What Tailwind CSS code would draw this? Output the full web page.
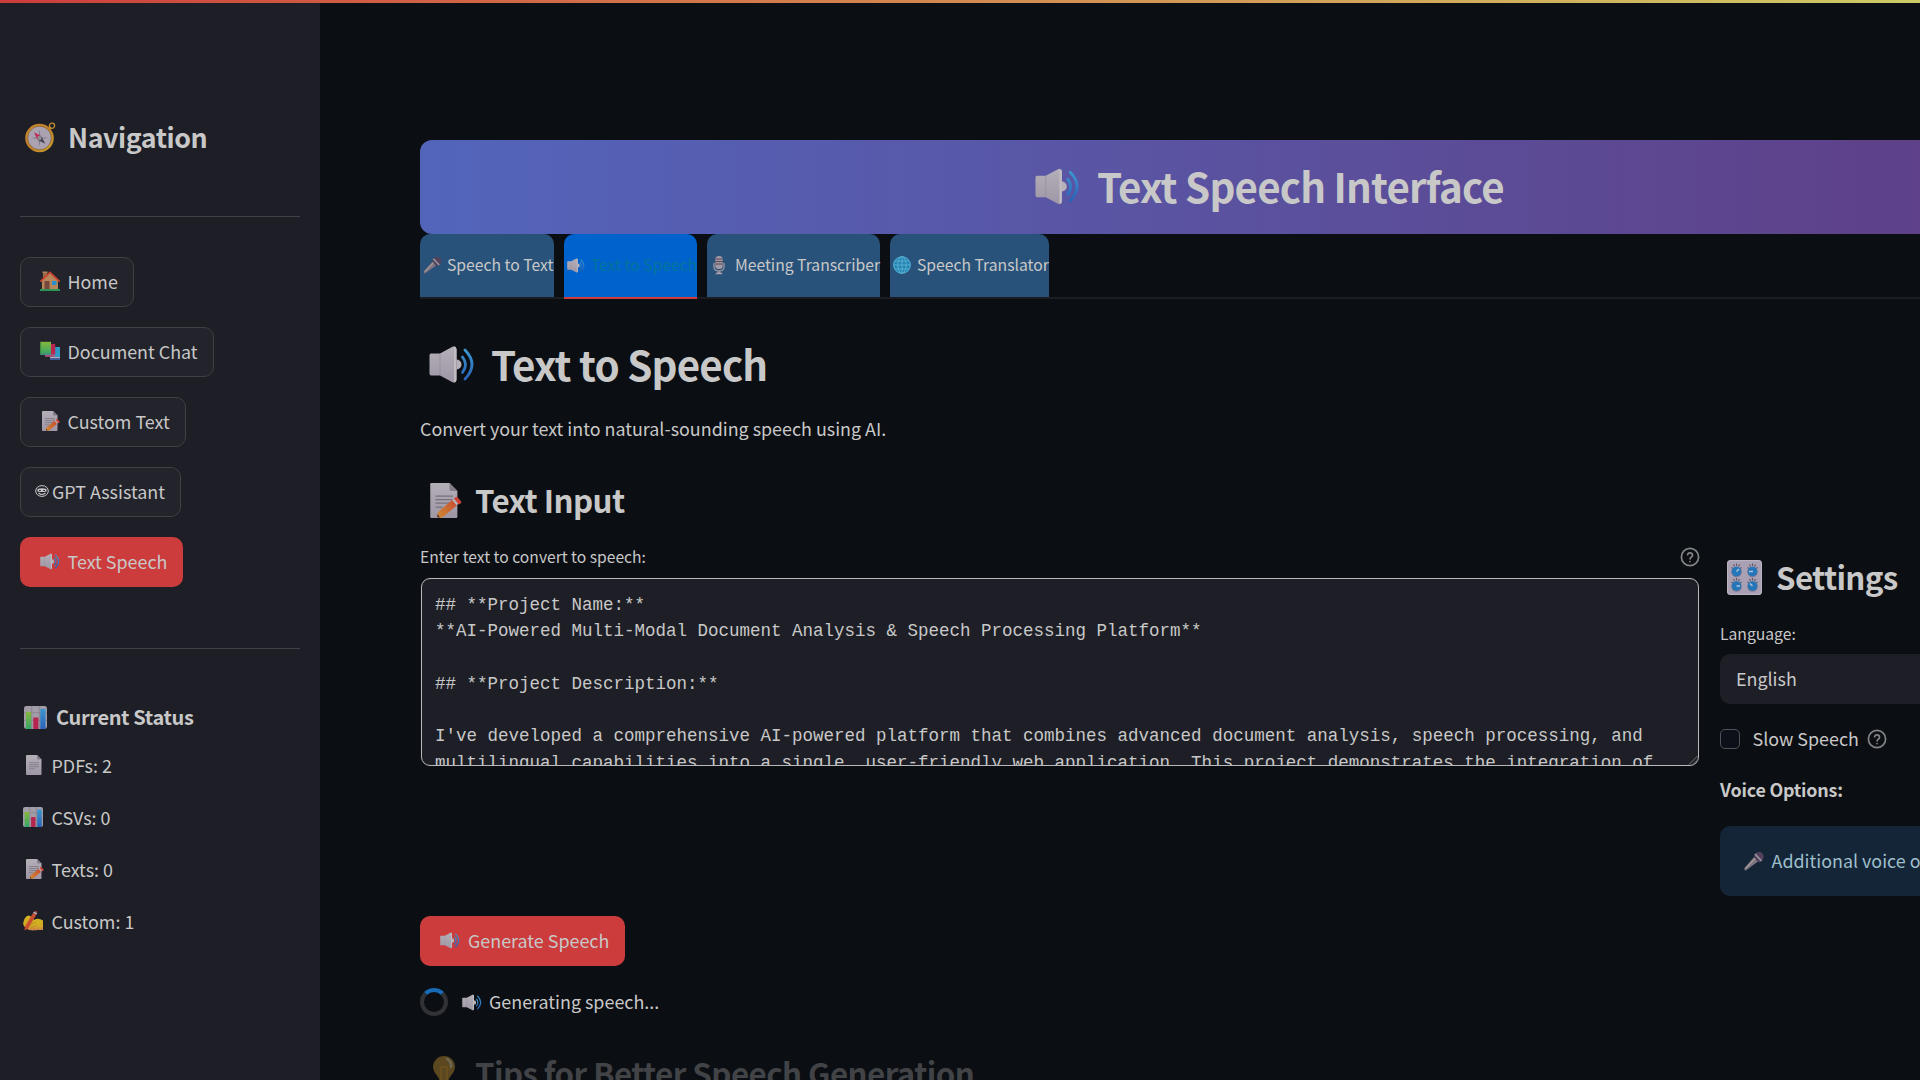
<!DOCTYPE html>
<html lang="en">
<head>
<meta charset="utf-8">
<title>Text Speech Interface</title>
<script src="https://cdn.jsdelivr.net/npm/@tailwindcss/browser@4"></script>
</head>
<body class="relative h-[1080px] w-[1920px] overflow-hidden bg-[#0b0e12] font-['Noto_Sans_CJK_SC','Source_Sans_3',sans-serif] text-[17.9px] text-[#c8c8c8]">
<svg class="absolute h-0 w-0" aria-hidden="true">
  <defs>
    <linearGradient id="gBlue" x1="0" y1="0" x2="0" y2="1"><stop offset="0" stop-color="#3b97cf"/><stop offset="1" stop-color="#2a62b8"/></linearGradient>
    <linearGradient id="gGrey" x1="0" y1="0" x2="0" y2="1"><stop offset="0" stop-color="#b4afb7"/><stop offset="1" stop-color="#9e96a6"/></linearGradient>
    <linearGradient id="gGreen" x1="0" y1="0" x2="0" y2="1"><stop offset="0" stop-color="#86b83c"/><stop offset="1" stop-color="#35a569"/></linearGradient>
    <linearGradient id="gGold" x1="0" y1="0" x2="1" y2="1"><stop offset="0" stop-color="#c98a2c"/><stop offset=".5" stop-color="#bf7d28"/><stop offset="1" stop-color="#d0a52c"/></linearGradient>
    <linearGradient id="gHand" x1="0" y1="0" x2="0" y2="1"><stop offset="0" stop-color="#d3b41f"/><stop offset=".7" stop-color="#d0aa24"/><stop offset="1" stop-color="#cc7a50"/></linearGradient>
    <linearGradient id="gOrange" x1="0" y1="1" x2="1" y2="0"><stop offset="0" stop-color="#cd8a35"/><stop offset="1" stop-color="#c9492f"/></linearGradient>
    <symbol id="speaker" viewBox="0 0 46 37">
      <path d="M2 7.500h9L23 1q4-2 4.500 2v31q-.5 4-4.500 2L11 29.500H2Q.5 29.500.5 27.500V9.500Q.5 7.500 2 7.500z" fill="url(#gGrey)"/>
      <path d="M25 1v35q2.500 0 2.500-3V4q0-3-2.500-3z" fill="#c0bcc2"/>
      <path d="M27.500 13.500a5 5 0 0 1 0 10z" fill="#b7b2ba"/>
      <path d="M11 8v21" stroke="#8f8b95" stroke-width=".7"/>
      <path d="M33.500 11q6 7.500 0 15.500M36 4q14 14.500 0 29" fill="none" stroke="url(#gBlue)" stroke-width="2.800" stroke-linecap="round"/>
    </symbol>
    <symbol id="page" viewBox="0 0 32 40">
      <path d="M1.500 0H22l9 9v29.500q0 1.500-1.500 1.500h-28Q0 40 0 38.500v-37Q0 0 1.500 0z" fill="url(#gGrey)"/>
      <path d="M22 0l9 9h-7.500Q22 9 22 7.500z" fill="#837c89"/>
      <path d="M6 15.500h20M6 19.500h20M6 23.500h20M6 27.500h12" stroke="#77717e" stroke-width="1.400"/>
    </symbol>
    <symbol id="memo" viewBox="0 0 36 40">
      <path d="M1.500 0H22l9 9v29.500q0 1.500-1.500 1.500h-28Q0 40 0 38.500v-37Q0 0 1.500 0z" fill="url(#gGrey)"/>
      <path d="M22 0l9 9h-7.500Q22 9 22 7.500z" fill="#837c89"/>
      <path d="M6 15h20M6 19h20M6 23h16M6 27.500h8" stroke="#77717e" stroke-width="1.400"/>
      <path d="M9 33l16.500-14 5.500 6L14 39.500H8.500q-1-3 .5-6.500z" fill="url(#gOrange)"/>
      <path d="M25 19.500l2.500-2 5 6-2.500 2z" fill="#b9b3bc"/>
      <path d="M27 17.700l2.300-1.700q1.200-.7 2 .3l4 4.700q.7 1-.3 2l-2.500 1.500z" fill="#cc4438"/>
      <path d="M8.200 39.500q-.6-2 .3-4l2.500 4z" fill="#4e3038"/>
    </symbol>
    <symbol id="chart" viewBox="0 0 24 24">
      <rect width="24" height="24" rx="2.500" fill="#a39da8"/>
      <path d="M8 0v24M16 0v24M0 7h24M0 15h24" stroke="#84808a" stroke-width=".8"/>
      <rect x="2" y="6" width="5.500" height="18" fill="url(#gGreen)"/>
      <rect x="9.700" y="12" width="5.300" height="12" fill="#b62450"/>
      <rect x="17" y="3" width="5.500" height="21" fill="url(#gBlue)"/>
    </symbol>
    <symbol id="house" viewBox="0 0 20 20">
      <path d="M3 1h4v7H3z" fill="#99694a"/><path d="M2.500.5h5v1.600h-5z" fill="#b0855d"/>
      <path d="M2 9l8-7.500L18 9v10H2z" fill="#b8865b"/>
      <path d="M.8 10.200L10 1.500l9.200 8.700" fill="none" stroke="#c9432f" stroke-width="1.700" stroke-linecap="round"/>
      <path d="M4.500 10h5v8.500h-5z" fill="#75473c"/><path d="M12 10h4.500v4H12z" fill="#278fc9"/>
      <path d="M0 18h20v2H0z" fill="#2c9455"/>
    </symbol>
    <symbol id="books" viewBox="0 0 20 20">
      <path d="M11 6h9v10h-9z" fill="#2f9ac4"/><path d="M10 16h10v1.300H10z" fill="#b0a9b6"/><path d="M10 17.300h10v1.500H10z" fill="#4768b5"/>
      <path d="M6 3h9.200v10.500H6z" fill="#ba264f"/><path d="M5 13.500h10v2.300H5z" fill="#b0537c"/>
      <path d="M0 .8h11v12.500H0z" fill="url(#gGreen)"/><path d="M0 12h10.500v2H1Q0 14 0 12z" fill="#46907a"/><path d="M.6 1v12" stroke="#3d823e" stroke-width=".9"/>
    </symbol>
    <symbol id="compass" viewBox="0 0 31 31">
      <circle cx="27" cy="3.700" r="2.600" fill="none" stroke="#bf8a2a" stroke-width="1.300"/>
      <path d="M23 8l2.500-3" stroke="#c29230" stroke-width="3"/>
      <circle cx="14.500" cy="16" r="14.300" fill="url(#gGold)"/><circle cx="14.500" cy="16" r="11.800" fill="#aaa2b0"/>
      <circle cx="14.500" cy="16" r="11.800" fill="none" stroke="#87602e" stroke-width=".7"/>
      <path d="M14.500 7l1 8 8 1-8 1-1 8-1-8-8-1 8-1z" fill="#817b88"/>
      <path d="M9 10.300l7.300 4-3.600 3.600z" fill="#c42451"/><path d="M20.300 21.800l-7.600-3.900 3.600-3.600z" fill="#44424c"/><circle cx="14.500" cy="16" r="2.200" fill="#8d8b91"/>
    </symbol>
    <symbol id="hand" viewBox="0 0 20 20">
      <path d="M.5 11q1-5.500 5-6.500l4 1.500 1.500 3q4-2.500 9 .5V19h-6q-1 .8-3 0-1 1-3 0-1 .5-3-.5Q-1 15 .5 11z" fill="url(#gHand)"/>
      <path d="M2 15.500L10 2l3.300 1.700L5.300 17.300 1.500 19.500z" fill="#ca4d30"/><path d="M10 2l1-1.500 3.300 1.600-1 1.700z" fill="#b9a4ac"/><path d="M11.300 0h2q1.500.5 1 2z" fill="#c2353a"/>
      <path d="M7 14.500q3.500-3 6-3M8 17q3-2.300 5.500-2.500" fill="none" stroke="#b38527" stroke-width=".6"/>
    </symbol>
    <symbol id="mic" viewBox="0 0 20 20">
      <path d="M1 17L10.500 6l4 4.500L3 19q-1.500 1-2-.3-.6-1 0-1.700z" fill="#7d747f"/><path d="M2 17.500L12 7" stroke="#a09798" stroke-width="1.300"/>
      <path d="M12 2.500q4-3.500 7 0t-1 7.500q-2 2-3 1L10.500 6q-.5-1.500 1.500-3.500z" fill="#51415c"/>
      <path d="M11.500 3l6.500 7" stroke="#9b959d" stroke-width="1.700"/>
    </symbol>
    <symbol id="studio" viewBox="0 0 12 19">
      <rect x="2.200" width="7.600" height="13" rx="3.600" fill="#a099a4"/><path d="M2.200 3h7.600M2.200 5.500h7.600M2.200 8h7.600" stroke="#5b4558" stroke-width="1.100"/>
      <path d="M1 7v4q0 4 5 4t5-4V7" fill="none" stroke="#9b949f" stroke-width="1.300"/><path d="M4.500 14h3v3h-3z" fill="#8c8690"/><path d="M2.500 18.300q0-2 3.500-2t3.500 2z" fill="#aaa3ad"/>
    </symbol>
    <symbol id="globe" viewBox="0 0 18 18">
      <circle cx="9" cy="9" r="8.800" fill="#2484b4"/>
      <g fill="none" stroke="#5cb0d0" stroke-width=".9"><circle cx="9" cy="9" r="8.300"/><ellipse cx="9" cy="9" rx="4.200" ry="8.300"/><path d="M9 .7v16.600M.7 9h16.600M2 5h14M2 13h14"/></g>
    </symbol>
    <symbol id="knobs" viewBox="0 0 35 35">
      <rect width="35" height="35" rx="3.500" fill="#aaa0b3"/><rect x=".6" y=".6" width="33.800" height="33.800" rx="3" fill="none" stroke="#bdb6c3"/>
      <path d="M4.500 7.500l1.500 1M6.500 4.500l1 2M9.500 3.500v2.500M12.500 4.500l-1 2M14.500 7.500l-1.500 1M20.500 7.500l1.500 1M22.500 4.500l1 2M25.500 3.500v2.500M28.500 4.500l-1 2M30.500 7.500l-1.500 1M4.500 22l1.500 1M6.500 19l1 2M9.500 18v2.500M12.500 19l-1 2M14.500 22l-1.500 1M20.500 22l1.500 1M22.500 19l1 2M25.500 18v2.500M28.500 19l-1 2M30.500 22l-1.500 1" stroke="#5d5764" stroke-width="1.100"/>
      <g fill="#857c96"><circle cx="9.500" cy="12" r="5.300"/><circle cx="25.500" cy="12" r="5.300"/><circle cx="9.500" cy="26.500" r="5.300"/><circle cx="25.500" cy="26.500" r="5.300"/></g>
      <g fill="#2575b9"><circle cx="9.500" cy="11.500" r="4.800"/><circle cx="25.500" cy="11.500" r="4.800"/><circle cx="9.500" cy="26" r="4.800"/><circle cx="25.500" cy="26" r="4.800"/></g>
      <path d="M9.500 11.500l2.500-2.500M22 11.500h4M9.500 26h3.500M25.500 26l-2.500-2.500" stroke="#adc2d4" stroke-width="1.500"/>
    </symbol>
    <symbol id="bulb" viewBox="0 0 22 32">
      <path d="M11 0a11 11 0 0 1 11 11q0 4-3.500 8T15 27H7q0-4-3.500-8T0 11A11 11 0 0 1 11 0z" fill="#5b4820"/>
      <path d="M8 25V15q-2-4 2-4h2q4 0 2 4v10" fill="none" stroke="#6e521f" stroke-width="1.500"/><path d="M14 3q5 3 4 8" stroke="#6f6852" stroke-width="2.500" fill="none" stroke-linecap="round"/><path d="M7 27h8v5H7z" fill="#4b4b50"/>
    </symbol>
    <symbol id="help" viewBox="0 0 20 20">
      <g fill="none" stroke="#838487" stroke-width="1.700" stroke-linecap="round" stroke-linejoin="round"><circle cx="10" cy="10" r="8.600"/><path d="M7.600 7.700a2.500 2.500 0 0 1 4.900.8c0 1.600-2.400 2.100-2.400 3.300M10 14.500v.1"/></g>
    </symbol>
    <symbol id="robot" viewBox="0 0 14 12">
      <ellipse cx="7" cy="6" rx="6.300" ry="5.400" fill="none" stroke="#c8c8c8" stroke-width="1"/>
      <path d="M2.500 4q4.500-1.500 9 0v2.600q-4.500 1-9 0z" fill="#c8c8c8"/><path d="M4 5.500h1.800M8.200 5.500H10" stroke="#23242c" stroke-width="1"/><path d="M3.600 8q3.400 3 6.800 0" fill="none" stroke="#c8c8c8" stroke-width="1.100"/>
    </symbol>
  </defs>
</svg>

<div class="flex h-[1080px] w-[1920px] overflow-hidden">
  <aside class="flex w-[320px] shrink-0 flex-col bg-[#1e1f26] px-5 whitespace-nowrap">
    <div class="mt-[115px] flex h-11 items-center pl-[5px] text-[26.8px] font-bold tracking-[-0.016em]"><svg class="mr-[12px] h-[31px] w-[31px]"><use href="#compass"/></svg>Navigation</div>
    <div class="mt-[57px] h-px shrink-0 bg-[#404146]"></div>
    <nav class="mt-10 flex flex-col items-start gap-5">
      <button class="flex h-[50px] w-[114px] items-center rounded-[10px] border border-[#3f4045] bg-[#22232b] pb-0.5 pl-[19px]"><svg class="mr-[7.5px] h-5 w-5"><use href="#house"/></svg>Home</button>
      <button class="flex h-[50px] w-[194px] items-center rounded-[10px] border border-[#3f4045] bg-[#22232b] pb-0.5 pl-[19px]"><svg class="mr-[7.5px] h-5 w-5"><use href="#books"/></svg>Document Chat</button>
      <button class="flex h-[50px] w-[166px] items-center rounded-[10px] border border-[#3f4045] bg-[#22232b] pb-0.5 pl-[21px]"><svg class="mr-[7.5px] h-5 w-[18px]"><use href="#memo"/></svg>Custom Text</button>
      <button class="flex h-[50px] w-[161px] items-center rounded-[10px] border border-[#3f4045] bg-[#22232b] pb-0.5 pl-[14px]"><svg class="mr-[3px] h-3 w-[14px]"><use href="#robot"/></svg>GPT Assistant</button>
      <button class="flex h-[50px] w-[163px] items-center rounded-[10px] bg-[#cc3c3c] pb-0.5 pl-5"><svg class="mr-[7.5px] h-[17px] w-5"><use href="#speaker"/></svg>Text Speech</button>
    </nav>
    <div class="mt-[61px] h-px shrink-0 bg-[#404146]"></div>
    <div class="mt-[53px] flex h-[30px] items-center pl-1 text-[20px] font-bold tracking-[-0.018em]"><svg class="mr-[9px] h-[23px] w-[23px]"><use href="#chart"/></svg>Current Status</div>
    <div class="mt-[7px] flex flex-col">
      <div class="flex h-[52px] items-center pl-[6px]"><svg class="mr-[9.5px] h-5 w-4"><use href="#page"/></svg>PDFs: 2</div>
      <div class="flex h-[52px] items-center pl-[3px]"><svg class="mr-[8.5px] h-5 w-[20px]"><use href="#chart"/></svg>CSVs: 0</div>
      <div class="flex h-[52px] items-center pl-[6px]"><svg class="mr-[7.5px] h-5 w-[18px]"><use href="#memo"/></svg>Texts: 0</div>
      <div class="flex h-[52px] items-center pl-[3px]"><svg class="mr-[8.5px] h-5 w-[20px]"><use href="#hand"/></svg>Custom: 1</div>
    </div>
  </aside>

  <main class="w-[1600px] shrink-0 overflow-hidden pl-[100px] whitespace-nowrap">
    <header class="mt-[140px] flex h-[94px] w-[1698px] items-center rounded-xl bg-linear-to-r from-[#5265bb] to-[#5e3c82] pb-0.5 pl-[615px] text-[40.3px] font-bold tracking-[-0.02em]"><svg class="mr-[17px] h-[37px] w-[45px]"><use href="#speaker"/></svg>Text Speech Interface</header>
    <div class="flex h-[65px] w-[1698px] gap-[10px] border-b-2 border-[#1b1d22] text-[15.7px]">
      <div class="flex w-[134px] items-center rounded-t-[10px] bg-[#28527a] pb-px pl-[3px]"><svg class="mr-[6px] h-[18px] w-[18px] shrink-0"><use href="#mic"/></svg>Speech to Text</div>
      <div class="flex h-[65px] w-[133px] items-center rounded-t-[10px] border-b-2 border-[#cc3c3c] bg-[#0062cc] pb-px pl-[3px] text-[#00759c]"><svg class="mr-[6px] h-[15px] w-[18px] shrink-0"><use href="#speaker"/></svg>Text to Speech</div>
      <div class="flex w-[173px] items-center rounded-t-[10px] bg-[#28527a] pb-px pl-[6px]"><svg class="mr-[10px] h-[19px] w-3 shrink-0"><use href="#studio"/></svg>Meeting Transcriber</div>
      <div class="flex w-[159px] items-center rounded-t-[10px] bg-[#28527a] pb-px pl-[3px]"><svg class="mr-[6px] h-[18px] w-[18px] shrink-0"><use href="#globe"/></svg>Speech Translator</div>
    </div>
    <h1 class="mt-[36px] flex h-[58px] items-center pl-[9px] text-[40.3px] font-bold tracking-[-0.02em]"><svg class="mr-[16px] h-[37px] w-[46px]"><use href="#speaker"/></svg>Text to Speech</h1>
    <p class="mt-[20px] h-[30px] leading-[30px]">Convert your text into natural-sounding speech using AI.</p>
    <div class="flex w-[1700px] items-start">
      <section class="w-[1280px] shrink-0">
        <h2 class="mt-[34px] flex h-[46px] items-center pl-[10px] text-[31.3px] font-bold tracking-[-0.018em]"><svg class="mr-[13px] h-[35px] w-[32px]"><use href="#memo"/></svg>Text Input</h2>
        <div class="mt-[21px] flex h-[26px] items-center justify-between"><span class="pb-px text-[15.65px]">Enter text to convert to speech:</span><svg class="h-5 w-5"><use href="#help"/></svg></div>
        <div class="relative mt-[8px] ml-[1px] h-[188px] w-[1278px] overflow-hidden rounded-[9px] border border-[#b9b9bb] bg-[#1e1f26] px-[13px] py-[13px] font-['Liberation_Mono',monospace] text-[17.5px] leading-[26.25px] whitespace-pre"><p>## **Project Name:**
**AI-Powered Multi-Modal Document Analysis &amp; Speech Processing Platform**

## **Project Description:**

I've developed a comprehensive AI-powered platform that combines advanced document analysis, speech processing, and
multilingual capabilities into a single, user-friendly web application. This project demonstrates the integration of</p>
          <svg class="absolute right-0 bottom-0 h-[10px] w-[10px]" viewBox="0 0 10 10"><path d="M1 9.500L9.500 1M5 9.500L9.500 5" stroke="#77787c" stroke-width="1"/></svg>
        </div>
        <button class="mt-[150px] flex h-[50px] w-[205px] items-center rounded-[10px] bg-[#cc3c3c] pb-px pl-5"><svg class="mr-2 h-[17px] w-5"><use href="#speaker"/></svg>Generate Speech</button>
        <div class="mt-[21px] flex h-[30px] items-center"><span class="h-[28px] w-[28px] rounded-full border-4 border-[#303236] border-t-[#176ab4]"></span><svg class="mr-[7px] ml-[14px] h-[17px] w-5"><use href="#speaker"/></svg><span class="pb-px">Generating speech...</span></div>
        <h2 class="mt-[31px] flex h-[50px] items-center pl-[13px] text-[31.3px] font-bold tracking-[-0.018em] text-[#414347]"><svg class="mr-[20px] mb-0.5 h-[32px] w-[22px]"><use href="#bulb"/></svg>Tips for Better Speech Generation</h2>
      </section>
      <section class="ml-5 w-[400px] shrink-0">
        <h2 class="mt-[111px] flex h-[46px] items-center pl-[7px] text-[31.3px] font-bold tracking-[-0.02em]"><svg class="mr-[14px] h-[35px] w-[35px]"><use href="#knobs"/></svg>Settings</h2>
        <div class="mt-[21px] h-[26px] text-[15.7px] leading-[26px]">Language:</div>
        <div class="mt-[7px] flex h-[50px] items-center rounded-[10px] bg-[#1e1f26] pb-px pl-4">English</div>
        <div class="mt-5 flex h-[30px] items-center"><span class="mr-[12.5px] h-5 w-5 rounded-[5px] border border-[#505259] bg-[#0d1018]"></span><span class="pb-px">Slow Speech</span><svg class="ml-[8.5px] h-5 w-5"><use href="#help"/></svg></div>
        <div class="mt-[20px] h-[30px] leading-[30px] font-bold tracking-[-0.012em]">Voice Options:</div>
        <div class="mt-[22px] flex h-[70px] items-center rounded-[10px] bg-[#132536] pb-px pl-[23px] text-[#9fbfcc]"><svg class="mr-[7.5px] h-[20px] w-[21px]"><use href="#mic"/></svg>Additional voice options coming soon</div>
      </section>
    </div>
  </main>
</div>
<div class="absolute top-0 left-0 h-[3px] w-[1920px] bg-linear-to-r from-[#cc3c3c] to-[#ccca66]"></div>
</body>
</html>
